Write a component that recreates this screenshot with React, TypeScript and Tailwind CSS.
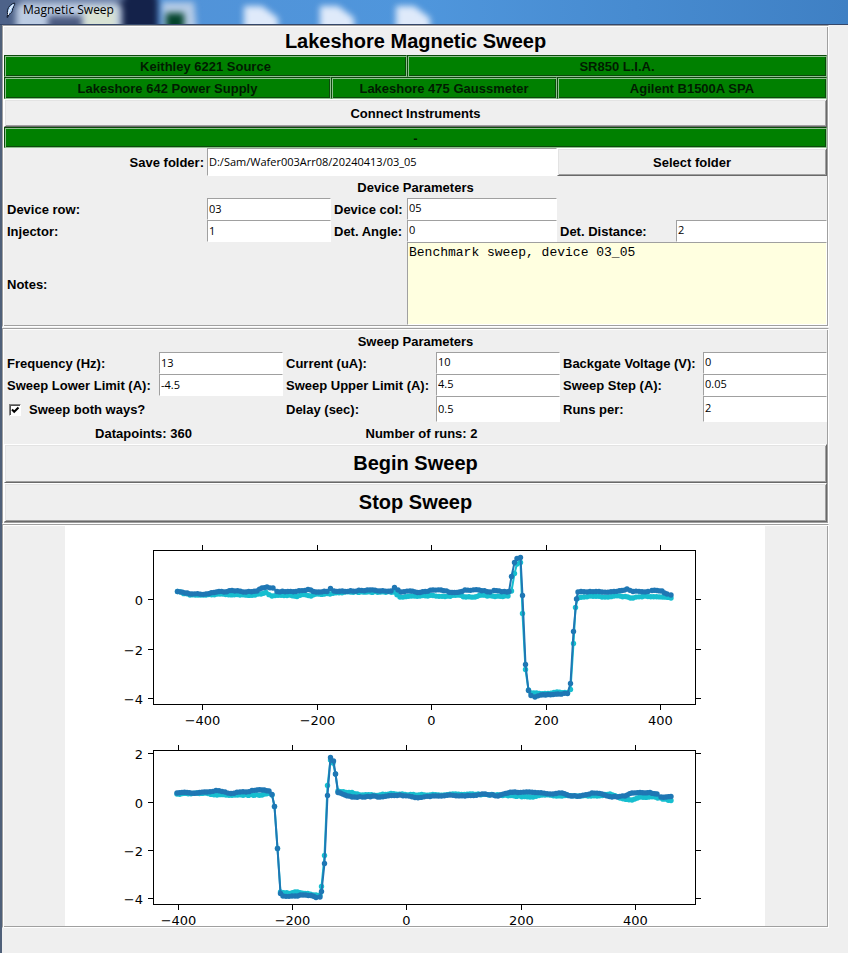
import React, { useId, useState } from "react";

type Point = [number, number];

const INSTRUMENTS_TOP = ["Keithley 6221 Source", "SR850 L.I.A."];
const INSTRUMENTS_BOTTOM = [
  "Lakeshore 642 Power Supply",
  "Lakeshore 475 Gaussmeter",
  "Agilent B1500A SPA",
];

const PANEL =
  "border border-t-[#a0a0a0] border-l-[#a0a0a0] border-r-white border-b-white p-px shadow-[inset_1px_1px_0_white,inset_-1px_-1px_0_#a0a0a0]";
const RAISED =
  "border border-t-white border-l-white border-r-[#696969] border-b-[#696969] shadow-[inset_1px_1px_0_#e3e3e3,inset_-1px_-1px_0_#a0a0a0] active:bg-[#e4e4e4]";
const SUNKEN = "border border-t-[#a0a0a0] border-l-[#a0a0a0] border-r-white border-b-white";

function Status({ children, className = "h-[22px]" }: { children: React.ReactNode; className?: string }) {
  return (
    <div
      className={`flex items-center justify-center border border-t-[#0b4a0b] border-l-[#0b4a0b] border-r-[#8fc08f] border-b-[#8fc08f] bg-[#008000] pt-0.5 text-[#001c00] shadow-[inset_1px_1px_0_#8fc08f,inset_-1px_-1px_0_#0b4a0b] ${className}`}
    >
      {children}
    </div>
  );
}

function Field({
  label,
  value,
  labelClass = "",
  inputClass = "",
}: {
  label: string;
  value: string;
  labelClass?: string;
  inputClass?: string;
}) {
  const id = useId();
  return (
    <>
      <label htmlFor={id} className={`flex items-center whitespace-nowrap px-[3px] pt-0.5 ${labelClass}`}>
        {label}
      </label>
      <input
        id={id}
        type="text"
        defaultValue={value}
        className={`w-full min-w-0 rounded-none bg-white px-px pb-0.5 font-['Open_Sans','Noto_Sans',sans-serif] text-[11px] font-normal outline-none ${SUNKEN} ${inputClass}`}
      />
    </>
  );
}

/* Fills long gaps between key points with evenly spaced, slightly jittered samples. */
function sample(keys: Point[]): Point[] {
  const out: Point[] = [keys[0]];
  for (let i = 1; i < keys.length; i++) {
    const [x0, y0] = keys[i - 1];
    const [x1, y1] = keys[i];
    const steps = Math.max(1, Math.round((x1 - x0) / 2.8));
    for (let s = 1; s <= steps; s++) {
      const t = s / steps;
      const x = x0 + (x1 - x0) * t;
      const jitter = s === steps ? 0 : Math.sin(x * 12.9) * 0.4;
      out.push([x, y0 + (y1 - y0) * t + jitter]);
    }
  }
  return out;
}

const FORWARD_NEW: Point[] = [
  [177.5, 591.5], [185, 593], [192, 594], [206, 594], [214, 592.5], [219, 591.5], [224, 592], [232, 590.5],
  [246, 592], [257, 591], [262, 588], [267, 587], [273, 588], [277, 591.5], [296, 591.5], [308, 589.5],
  [316, 592], [327, 591.5], [330.5, 588.5], [334, 591], [345, 591.5], [370, 590], [380, 591], [391, 591],
  [394.5, 587.5], [398, 590], [401, 592], [410, 591], [420, 592.5], [433, 590], [441, 590], [452, 592.5],
  [462, 591.5], [465, 590], [479, 590], [490, 592], [494, 590.5], [507, 592], [509, 591.5], [511.5, 576.5],
  [514.5, 562.5], [517, 558.5], [520.5, 557.5], [522.5, 595.5], [525.5, 664.5], [528.5, 690.5], [531, 695.5],
  [535, 697], [541, 695], [548, 694.5], [558, 694], [567.5, 693.5], [570.5, 683.5], [573.5, 631.5],
  [576.5, 599], [578, 592], [590, 591.5], [602, 592], [614, 591.5], [622, 590.5], [627, 589], [633, 591.5],
  [648, 591.5], [652, 590.5], [662, 591], [667, 594], [671, 595],
];
const FORWARD_OLD: Point[] = [
  [177.5, 591.5], [190, 595], [206, 595], [220, 594], [240, 595], [255, 595], [261, 594], [266, 592.5],
  [272, 596], [290, 595], [297, 596.5], [303, 594.5], [311, 596], [316, 594], [330, 594], [345, 592],
  [394, 592], [400, 597], [420, 596], [433, 595.5], [445, 596.5], [458, 595], [466, 597], [475, 597],
  [482, 595], [495, 596.5], [508, 596], [511.5, 591], [514.5, 573.5], [517, 564], [520.5, 562.5],
  [522.5, 613.5], [525.5, 669.5], [528.5, 690], [531, 693], [545, 693.5], [557, 692], [567.5, 693],
  [570.5, 689.5], [573.5, 643.5], [575.5, 607.5], [578, 598], [590, 596], [602, 597], [620, 596],
  [633, 598], [645, 596], [671, 598],
];
const REVERSE_NEW: Point[] = [
  [177, 793], [187, 792.5], [197, 793], [207, 792], [216, 790.5], [222, 791.5], [231, 793.5], [240, 792],
  [246, 792], [252, 790.5], [262, 790], [269, 791], [272, 794.5], [274.5, 806.5], [277.5, 848.5],
  [280.5, 893.5], [283, 896], [295, 896], [303, 895], [311, 895.5], [316, 897.5], [320, 897],
  [321.5, 891.5], [324.5, 863.5], [327.5, 795.5], [330.5, 757.5], [333.5, 761], [335.5, 774],
  [338, 792.5], [345, 795], [352, 797], [365, 797], [373, 796], [380, 797], [400, 795], [415, 797.5],
  [430, 796.5], [450, 795], [465, 796], [485, 794], [498, 796], [508, 793], [515, 792], [535, 792.5],
  [550, 794], [562, 793], [572, 796], [580, 796], [592, 793], [602, 794], [612, 797], [625, 796],
  [632, 793], [640, 792.5], [650, 792.5], [657, 794], [661, 797], [671, 796.5],
];
const REVERSE_OLD: Point[] = [
  [177, 794], [205, 793], [217, 795], [235, 795], [262, 795], [269, 793], [272, 795], [274.5, 806.5],
  [277.5, 848.5], [280.5, 892], [290, 893.5], [295, 892], [305, 893.5], [316, 895], [320, 895],
  [321.5, 886.5], [324.5, 855.5], [327.5, 785.5], [330.5, 760], [333, 763], [335.5, 774], [338, 791],
  [346, 792.5], [352, 792.5], [360, 795], [380, 795], [391, 793.5], [405, 794.5], [430, 795],
  [470, 794], [500, 795], [530, 797], [545, 795], [562, 796], [585, 795.5], [597, 796], [610, 794],
  [620, 798], [632, 800], [640, 797], [655, 797], [671, 800.5],
];

function Trace({ keys, color }: { keys: Point[]; color: string }) {
  const pts = sample(keys);
  return (
    <g>
      <polyline
        points={pts.map((p) => p.join(",")).join(" ")}
        fill="none"
        stroke={color}
        strokeWidth={2}
        strokeLinejoin="round"
      />
      {pts.map(([x, y], i) => (
        <circle key={i} cx={x} cy={y} r={2.7} fill={color} />
      ))}
    </g>
  );
}

function Axes({
  top,
  xTicks,
  yTicks,
  older,
  newer,
}: {
  top: number;
  xTicks: [number, string][];
  yTicks: [number, string][];
  older: Point[];
  newer: Point[];
}) {
  const bottom = top + 154;
  return (
    <g>
      <Trace keys={older} color="#17becf" />
      <Trace keys={newer} color="#1f77b4" />
      <g stroke="black" strokeWidth={1} fill="none">
        <rect x={153.5} y={top + 0.5} width={542} height={154} />
        {xTicks.map(([x]) => (
          <path key={x} d={`M${x} ${top}v-5M${x} ${bottom + 1}v5`} />
        ))}
        {yTicks.map(([y]) => (
          <path key={y} d={`M153 ${y}h-5M696 ${y}h5`} />
        ))}
      </g>
      {xTicks.map(([x, text]) => (
        <text key={text} x={x} y={bottom + 21} textAnchor="middle">
          {text}
        </text>
      ))}
      {yTicks.map(([y, text]) => (
        <text key={text} x={143} y={y + 5} textAnchor="end">
          {text}
        </text>
      ))}
    </g>
  );
}

function Plot() {
  return (
    <svg
      viewBox="65 526 700 400"
      className="block h-[400px] w-[700px] max-w-full overflow-visible bg-white font-['DejaVu_Sans',sans-serif] text-[13px] font-normal"
      role="img"
      aria-label="Sweep results"
    >
      <Axes
        top={550}
        xTicks={[[202.5, "−400"], [317.5, "−200"], [431.5, "0"], [546.5, "200"], [660.5, "400"]]}
        yTicks={[[599.5, "0"], [649.5, "−2"], [698.5, "−4"]]}
        older={FORWARD_OLD}
        newer={FORWARD_NEW}
      />
      <Axes
        top={750}
        xTicks={[[178.5, "−400"], [292.5, "−200"], [406.5, "0"], [521.5, "200"], [635.5, "400"]]}
        yTicks={[[753.5, "2"], [802.5, "0"], [850.5, "−2"], [898.5, "−4"]]}
        older={REVERSE_OLD}
        newer={REVERSE_NEW}
      />
    </svg>
  );
}

/* Blurred desktop seen through the glass title bar. */
function GlassBackdrop() {
  return (
    <svg
      className="absolute inset-0 h-full w-full overflow-visible blur-[3px]"
      viewBox="0 0 848 24"
      preserveAspectRatio="xMinYMin slice"
      aria-hidden="true"
    >
      <rect x="-10" y="-8" width="168" height="46" rx="8" fill="#14224a" />
      <rect x="-10" y="-8" width="28" height="46" fill="#4d6289" />
      <rect x="16" y="2" width="106" height="40" rx="8" fill="#bccce3" />
      <rect x="84" y="8" width="32" height="30" fill="#d8e2d4" />
      <rect x="48" y="16" width="34" height="20" fill="#4b5a80" />
      <rect x="16" y="-8" width="108" height="9" fill="#6f86ae" />
      <path d="M162 2h32l3 32h-34z" fill="#b5cbe6" />
      <rect x="166" y="13" width="18" height="20" fill="#04442c" />
      <path d="M244 6h18l16 12v20h-34z" fill="#dfeafa" />
      <path d="M320 6h18l16 12v20h-34z" fill="#dfeafa" />
      <path d="M396 6h18l16 12v20h-34z" fill="#dfeafa" />
    </svg>
  );
}

function Feather() {
  return (
    <svg viewBox="0 0 12 16" className="h-4 w-3" aria-hidden="true">
      <path
        d="M9.500 1C6.500 1.500 3.300 4.500 2.500 8.200c-.3 1.600-.2 3 .2 4.200L2 15.400l.8-.2 1-2.700c2.400-.8 4-3.400 3.900-6l1.200-1.600-.4-.4C9.500 3.400 10 2 9.500 1z"
        fill="#a9cdf7"
        stroke="#0c1528"
        strokeWidth="1"
      />
      <path d="M8.300 2.800C5.600 5.500 4 8.600 3.200 13" fill="none" stroke="#ffffff" strokeWidth="1" />
    </svg>
  );
}

export default function App() {
  const [both, setBoth] = useState(true);
  return (
    <div className="min-h-screen bg-[#efefef] font-['Liberation_Sans',Arial,sans-serif] text-[13px] leading-4 font-bold text-black">
      <header className="relative h-[25px] overflow-hidden border-b border-[#34476a] bg-linear-to-r from-[#5391d6] via-[#4f96dc] to-[#3f80c4]">
        <GlassBackdrop />
        <div className="relative flex h-5 items-center gap-1.5 pl-[5px]">
          <Feather />
          <span className="font-['Open_Sans','Noto_Sans',sans-serif] text-xs font-normal">Magnetic Sweep</span>
        </div>
      </header>

      <main className="flex min-h-[928px] flex-col border-l-2 border-[#4f6079] pr-[19px]">
        <section className={PANEL}>
          <h1 className="pt-px text-center text-[20px] leading-[27px]">Lakeshore Magnetic Sweep</h1>
          <div className="grid grid-cols-[403fr_420fr]">
            {INSTRUMENTS_TOP.map((name) => (
              <Status key={name}>{name}</Status>
            ))}
          </div>
          <div className="grid grid-cols-[327fr_226fr_270fr]">
            {INSTRUMENTS_BOTTOM.map((name) => (
              <Status key={name}>{name}</Status>
            ))}
          </div>
          <button type="button" className={`block h-7 w-full pt-0.5 ${RAISED}`}>
            Connect Instruments
          </button>
          <Status className="h-[21px]">-</Status>

          <form
            className="grid grid-cols-[203fr_124fr_76fr_150fr_119fr_151fr]"
            onSubmit={(e) => e.preventDefault()}
          >
            <Field
              label="Save folder:"
              value="D:/Sam/Wafer003Arr08/20240413/03_05"
              labelClass="justify-end"
              inputClass="col-span-3 h-7"
            />
            <button type="button" className={`col-span-2 pt-0.5 ${RAISED}`}>
              Select folder
            </button>

            <h2 className="col-span-6 pt-0.5 text-center leading-5">Device Parameters</h2>

            <Field label="Device row:" value="03" inputClass="h-[22px]" />
            <Field label="Device col:" value="05" />
            <div className="col-span-2" />

            <Field label="Injector:" value="1" inputClass="h-[22px]" />
            <Field label="Det. Angle:" value="0" />
            <Field label="Det. Distance:" value="2" />

            <label htmlFor="notes" className="col-span-3 flex items-center px-[3px] pt-0.5">
              Notes:
            </label>
            <textarea
              id="notes"
              defaultValue="Benchmark sweep, device 03_05"
              className={`col-span-3 block h-[83px] resize-none rounded-none bg-[#ffffe0] px-px py-0.5 font-['Liberation_Mono','Courier_New',monospace] text-[13px] leading-4 font-normal outline-none ${SUNKEN}`}
            />
          </form>
        </section>

        <section className={`mt-px ${PANEL}`}>
          <h2 className="pt-0.5 text-center leading-5">Sweep Parameters</h2>
          <form
            className="grid grid-cols-[155fr_124fr_153fr_124fr_143fr_124fr]"
            onSubmit={(e) => e.preventDefault()}
          >
            <Field label="Frequency (Hz):" value="13" inputClass="h-[22px]" />
            <Field label="Current (uA):" value="10" />
            <Field label="Backgate Voltage (V):" value="0" />

            <Field label="Sweep Lower Limit (A):" value="-4.5" inputClass="h-[22px]" />
            <Field label="Sweep Upper Limit (A):" value="4.5" />
            <Field label="Sweep Step (A):" value="0.05" />

            <label className="col-span-2 flex items-center gap-2 pt-0.5 pl-[5px]">
              <span className="grid size-3">
                <input
                  type="checkbox"
                  checked={both}
                  onChange={(e) => setBoth(e.target.checked)}
                  className="col-start-1 row-start-1 size-3 appearance-none border border-t-[#808080] border-l-[#808080] border-r-white border-b-white bg-white shadow-[inset_1px_1px_0_#505050]"
                />
                {both && (
                  <svg viewBox="0 0 12 12" className="pointer-events-none col-start-1 row-start-1 size-3">
                    <path d="M3 5.500l2.200 2.300L9.500 3.500" fill="none" stroke="black" strokeWidth="2" />
                  </svg>
                )}
              </span>
              Sweep both ways?
            </label>
            <Field label="Delay (sec):" value="0.5" inputClass="h-[26px]" />
            <Field label="Runs per:" value="2" />

            <output className="col-span-2 pt-0.5 text-center leading-5">Datapoints: 360</output>
            <output className="col-span-2 pt-0.5 text-center leading-5">Number of runs: 2</output>
          </form>
          <button type="button" className={`block h-[39px] w-full pb-0.5 text-[20px] ${RAISED}`}>
            Begin Sweep
          </button>
          <button type="button" className={`block h-[39px] w-full pb-0.5 text-[20px] ${RAISED}`}>
            Stop Sweep
          </button>
        </section>

        <section className={`flex justify-center ${PANEL} pr-0.5`}>
          <Plot />
        </section>
      </main>
    </div>
  );
}
